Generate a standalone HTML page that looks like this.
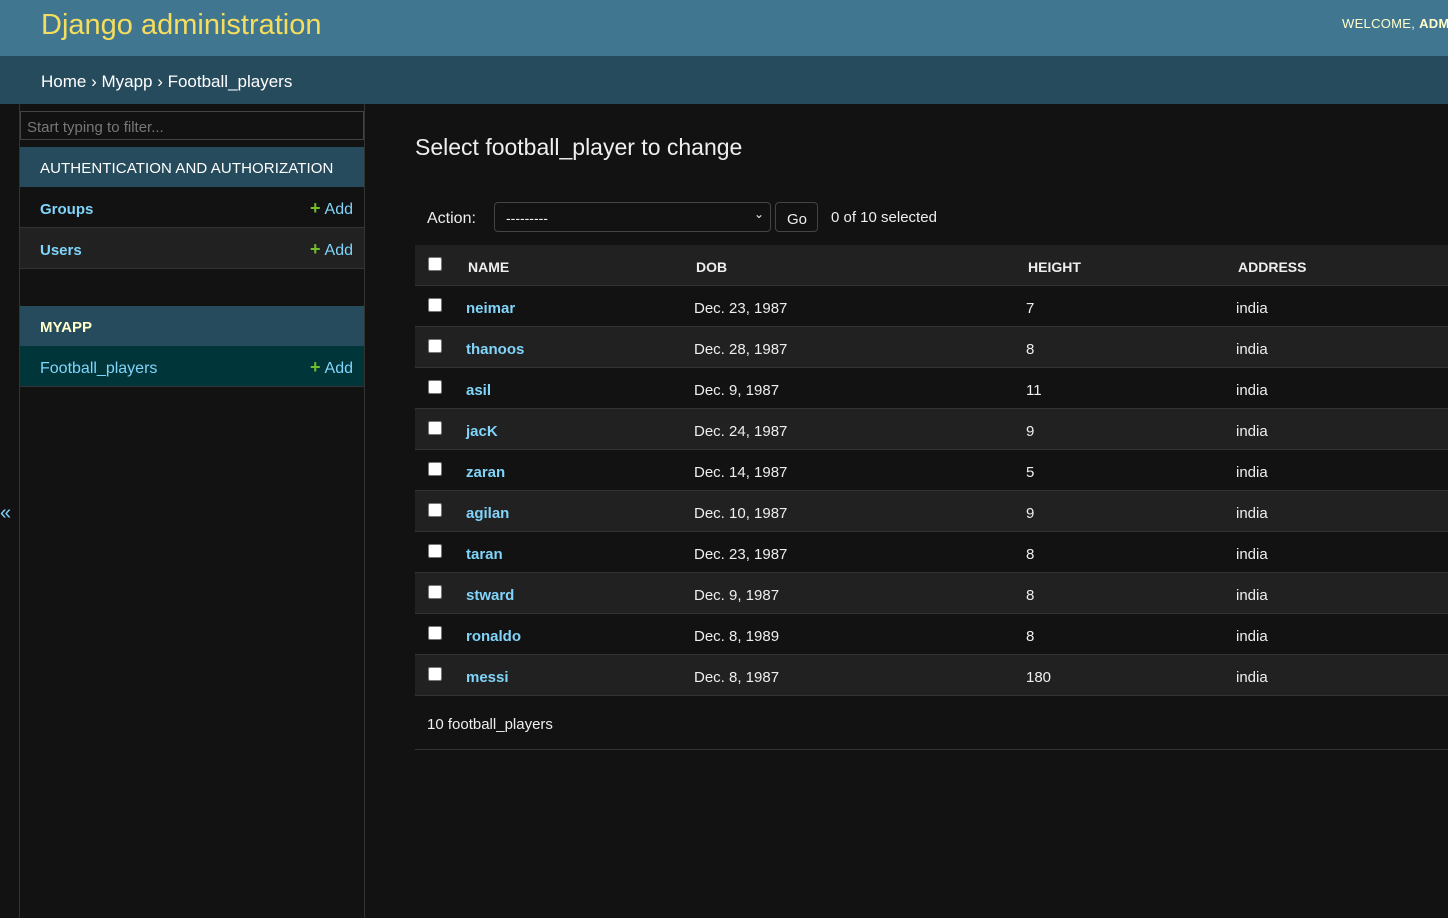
<!DOCTYPE html>
<html><head><meta charset="utf-8"><style>
*{box-sizing:border-box;margin:0;padding:0}
body{width:1448px;height:918px;overflow:hidden;background:#121212;font-family:"Liberation Sans",sans-serif;color:#eee;font-size:15px;position:relative}
.a{position:absolute}
#hdr{left:0;top:0;width:1448px;height:56px;background:#417690}
#hdr .t{left:41px;top:9px;font-size:29px;color:#f5dd5d;font-weight:300}
#hdr .w{left:1342px;top:16px;font-size:13px;color:#ffffcc;white-space:nowrap;letter-spacing:.3px}
#bc{left:0;top:56px;width:1448px;height:48px;background:#264b5d;color:#fff;font-size:17px}
#bc span{position:absolute;left:41px;top:16px}
.lnk{color:#81d4fa}
.add{position:absolute;right:11px;color:#81d4fa;font-size:16px}
.add b{color:#70bf2b;font-size:18px;margin-right:4px;font-weight:900}
.row{position:absolute;left:415px;width:1033px;height:41px;border-bottom:1px solid #333}
.row .cb{position:absolute;left:13px;top:12px;width:14px;height:14px;background:#fff;border-radius:2px;border:1px solid #777}
.row span{position:absolute;top:14px}
</style></head><body>
<div id="hdr" class="a"><div class="a t">Django administration</div><div class="a w">WELCOME, <b>ADMIN</b></div></div>
<div id="bc" class="a"><span>Home › Myapp › Football_players</span></div>
<div class="a" style="left:19px;top:104px;width:1px;height:814px;background:#333"></div>
<div class="a" style="left:364px;top:104px;width:1px;height:814px;background:#333"></div>
<div class="a" style="left:0;top:502px;color:#81d4fa;font-size:20px">«</div>
<div class="a" style="left:20px;top:111px;width:344px;height:29px;border:1px solid #444;background:#121212;color:#777;font-size:15px;padding:7px 6px">Start typing to filter...</div>
<div class="a" style="left:20px;top:147px;width:344px;height:40px;background:#264b5d;color:#fff;font-size:15px;padding:13px 20px;letter-spacing:.1px">AUTHENTICATION AND AUTHORIZATION</div>
<div class="a" style="left:20px;top:187px;width:344px;height:41px;background:#121212;border-bottom:1px solid #333"><span class="a lnk" style="left:20px;top:14px;font-weight:bold">Groups</span><span class="add" style="top:11px"><b>+</b>Add</span></div>
<div class="a" style="left:20px;top:228px;width:344px;height:41px;background:#212121;border-bottom:1px solid #333"><span class="a lnk" style="left:20px;top:14px;font-weight:bold">Users</span><span class="add" style="top:11px"><b>+</b>Add</span></div>
<div class="a" style="left:20px;top:306px;width:344px;height:40px;background:#264b5d;color:#ffffcc;font-size:15px;font-weight:bold;padding:13px 20px">MYAPP</div>
<div class="a" style="left:20px;top:346px;width:344px;height:41px;background:#00363a;border-bottom:1px solid #333"><span class="a lnk" style="left:20px;top:14px;font-size:16px">Football_players</span><span class="add" style="top:11px"><b>+</b>Add</span></div>

<div class="a" style="left:415px;top:134px;font-size:23px;font-weight:300;color:#eee">Select football_player to change</div>
<div class="a" style="left:427px;top:210px;font-size:16px">Action:</div>
<div class="a" style="left:494px;top:202px;width:277px;height:30px;border:1px solid #444;border-radius:4px;padding:7px 11px;font-size:14px">---------<span style="position:absolute;right:6px;top:4px;font-size:12px">&#8964;</span></div>
<div class="a" style="left:775px;top:202px;width:43px;height:30px;border:1px solid #444;border-radius:4px;padding:8px 11px;font-size:15px">Go</div>
<div class="a" style="left:831px;top:209px;font-size:15px">0 of 10 selected</div>

<div class="row" style="top:245px;background:#212121"><div class="cb"></div><span style="left:53px;font-weight:bold;font-size:14px">NAME</span><span style="left:281px;font-weight:bold;font-size:14px">DOB</span><span style="left:613px;font-weight:bold;font-size:14px">HEIGHT</span><span style="left:823px;font-weight:bold;font-size:14px">ADDRESS</span></div>

<div class="row" style="top:286px"><div class="cb"></div><span class="lnk" style="left:51px;font-weight:bold">neimar</span><span style="left:279px">Dec. 23, 1987</span><span style="left:611px">7</span><span style="left:821px">india</span></div>
<div class="row" style="top:327px;background:#212121"><div class="cb"></div><span class="lnk" style="left:51px;font-weight:bold">thanoos</span><span style="left:279px">Dec. 28, 1987</span><span style="left:611px">8</span><span style="left:821px">india</span></div>
<div class="row" style="top:368px"><div class="cb"></div><span class="lnk" style="left:51px;font-weight:bold">asil</span><span style="left:279px">Dec. 9, 1987</span><span style="left:611px">11</span><span style="left:821px">india</span></div>
<div class="row" style="top:409px;background:#212121"><div class="cb"></div><span class="lnk" style="left:51px;font-weight:bold">jacK</span><span style="left:279px">Dec. 24, 1987</span><span style="left:611px">9</span><span style="left:821px">india</span></div>
<div class="row" style="top:450px"><div class="cb"></div><span class="lnk" style="left:51px;font-weight:bold">zaran</span><span style="left:279px">Dec. 14, 1987</span><span style="left:611px">5</span><span style="left:821px">india</span></div>
<div class="row" style="top:491px;background:#212121"><div class="cb"></div><span class="lnk" style="left:51px;font-weight:bold">agilan</span><span style="left:279px">Dec. 10, 1987</span><span style="left:611px">9</span><span style="left:821px">india</span></div>
<div class="row" style="top:532px"><div class="cb"></div><span class="lnk" style="left:51px;font-weight:bold">taran</span><span style="left:279px">Dec. 23, 1987</span><span style="left:611px">8</span><span style="left:821px">india</span></div>
<div class="row" style="top:573px;background:#212121"><div class="cb"></div><span class="lnk" style="left:51px;font-weight:bold">stward</span><span style="left:279px">Dec. 9, 1987</span><span style="left:611px">8</span><span style="left:821px">india</span></div>
<div class="row" style="top:614px"><div class="cb"></div><span class="lnk" style="left:51px;font-weight:bold">ronaldo</span><span style="left:279px">Dec. 8, 1989</span><span style="left:611px">8</span><span style="left:821px">india</span></div>
<div class="row" style="top:655px;background:#212121"><div class="cb"></div><span class="lnk" style="left:51px;font-weight:bold">messi</span><span style="left:279px">Dec. 8, 1987</span><span style="left:611px">180</span><span style="left:821px">india</span></div>
<div class="a" style="left:427px;top:716px;font-size:15px">10 football_players</div>
<div class="a" style="left:415px;top:749px;width:1033px;height:1px;background:#333"></div>
</body></html>
